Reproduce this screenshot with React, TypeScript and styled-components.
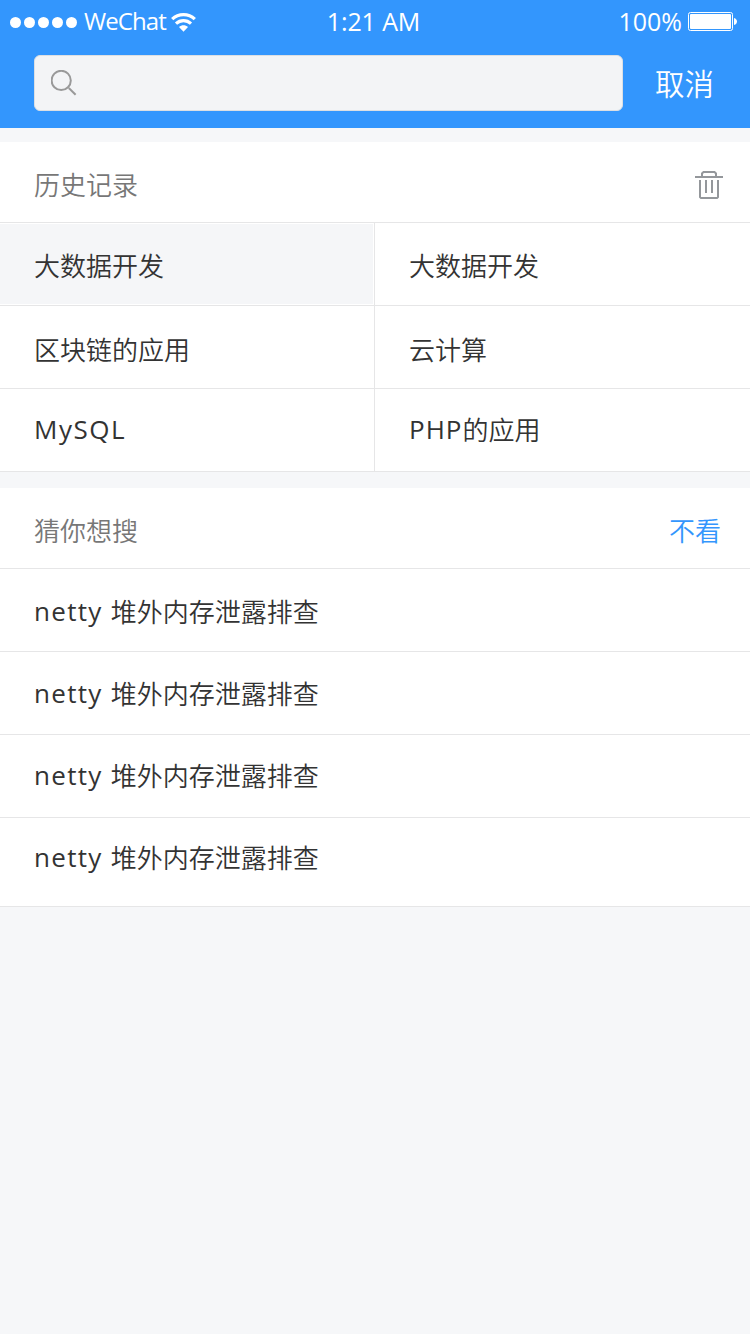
import React from "react";
import styled, { createGlobalStyle } from "styled-components";

const GlobalStyle = createGlobalStyle`
  * { box-sizing: border-box; }
  body {
    margin: 0;
    background: #f6f7f9;
    font-family: "Noto Sans CJK SC", sans-serif;
    font-size: 26px;
    font-weight: 350;
    line-height: 36px;
    color: #333;
  }
`;

const Screen = styled.div`
  width: 750px;
  min-height: 1334px;
  background: #f6f7f9;
`;

const Header = styled.header`
  height: 128px;
  background: #3396fd;
  color: #fff;
`;

const StatusBar = styled.div`
  display: grid;
  grid-template-columns: 1fr auto 1fr;
  align-items: center;
  height: 44px;
  padding: 0 13px 0 10px;
`;

const StatusGroup = styled.div<{ $end?: boolean }>`
  display: flex;
  align-items: center;
  justify-content: ${(p) => (p.$end ? "flex-end" : "flex-start")};
`;

const StatusText = styled.span<{ $size: number; $spacing: number }>`
  padding-bottom: 2px;
  font-family: "Open Sans", sans-serif;
  font-weight: 370;
  font-size: ${(p) => p.$size}px;
  letter-spacing: ${(p) => p.$spacing}px;
  white-space: nowrap;
`;

const Signal = styled.div`
  display: flex;
  gap: 3px;
  margin-right: 7px;
`;

const Dot = styled.i`
  width: 11px;
  height: 11px;
  border-radius: 50%;
  background: #fff;
`;

const WifiIcon = styled.svg`
  width: 25px;
  height: 20px;
  margin-left: 5px;
`;

const BatteryIcon = styled.svg`
  width: 49px;
  height: 20px;
  margin-left: 6px;
`;

const SearchBar = styled.div`
  display: flex;
  align-items: center;
  padding: 11px 0 0 34px;
`;

const SearchField = styled.div`
  display: flex;
  align-items: center;
  width: 589px;
  height: 56px;
  padding-left: 16px;
  border: 1px solid #dcdfe3;
  border-radius: 6px;
  background: #f3f4f6;
`;

const SearchIcon = styled.svg`
  width: 26px;
  height: 26px;
`;

const Cancel = styled.span`
  margin-left: 32px;
  padding-bottom: 2px;
  font-size: 29.5px;
`;

const Panel = styled.section<{ $gap: number }>`
  margin-top: ${(p) => p.$gap}px;
  background: #fff;
`;

const PanelHeader = styled.div`
  display: flex;
  align-items: center;
  justify-content: space-between;
  height: 81px;
  padding: 4px 27px 0 34px;
  border-bottom: 1px solid #e6e6e7;
`;

const PanelTitle = styled.h2`
  margin: 0;
  font-size: 26px;
  font-weight: 350;
  color: #777;
`;

const HideLink = styled.span`
  color: #3396fd;
  margin-right: 2px;
`;

const TrashIcon = styled.svg`
  width: 28px;
  height: 28px;
  margin-top: 2px;
`;

const HistoryGrid = styled.div`
  display: grid;
  grid-template-columns: 375px 375px;
`;

const HistoryCell = styled.div<{ $active?: boolean; $top: number }>`
  height: 83px;
  padding: ${(p) => p.$top}px 0 0 34px;
  border-bottom: 1px solid #e6e6e7;
  background: ${(p) => (p.$active ? "#f5f6f8" : "#fff")};
  box-shadow: ${(p) => (p.$active ? "inset -1px -1px #fff, inset 0 1px #fff" : "none")};
  &:nth-child(odd) {
    border-right: 1px solid #e6e6e7;
  }
`;

const SuggestRow = styled.div<{ $top: number; $height: number }>`
  height: ${(p) => p.$height}px;
  padding: ${(p) => p.$top}px 0 0 34px;
  border-bottom: 1px solid #e6e6e7;
`;

const Latin = styled.span<{ $spacing: number }>`
  font-family: "Open Sans", sans-serif;
  font-weight: 370;
  letter-spacing: ${(p) => p.$spacing}px;
  vertical-align: 1px;
`;

const history = [
  { cjk: "大数据开发", active: true, top: 24 },
  { cjk: "大数据开发", top: 24 },
  { cjk: "区块链的应用", top: 25 },
  { cjk: "云计算", top: 25 },
  { latin: "MySQL", top: 22 },
  { latin: "PHP", cjk: "的应用", top: 22 },
];

const suggestions = [
  { top: 24, height: 83 },
  { top: 23, height: 83 },
  { top: 22, height: 83 },
  { top: 21, height: 89 },
];

export default function App() {
  return (
    <Screen>
      <GlobalStyle />
      <Header>
        <StatusBar>
          <StatusGroup>
            <Signal>
              {[0, 1, 2, 3, 4].map((n) => (
                <Dot key={n} />
              ))}
            </Signal>
            <StatusText $size={24} $spacing={-0.9}>WeChat</StatusText>
            <WifiIcon viewBox="0 0 25 20" fill="none" stroke="#fff" strokeWidth="3.2">
              <path d="M1.2 7.2C7.5 1 17.5 1 23.8 7.2" />
              <path d="M5 11.6C9.3 7.7 15.7 7.7 20 11.6" />
              <path d="M8 15C10.5 12.6 14.5 12.6 17 15L12.5 19.8Z" fill="#fff" stroke="none" />
            </WifiIcon>
          </StatusGroup>
          <StatusText $size={25} $spacing={-0.1}>1:21 AM</StatusText>
          <StatusGroup $end>
            <StatusText $size={25} $spacing={0}>100%</StatusText>
            <BatteryIcon viewBox="0 0 49 20">
              <rect x=".5" y=".5" width="44" height="18" rx="2" fill="none" stroke="#fff" />
              <rect x="2" y="2" width="41" height="15" rx="1" fill="#fff" />
              <path d="M46 6c4 1 4 6 0 7z" fill="#fff" />
            </BatteryIcon>
          </StatusGroup>
        </StatusBar>
        <SearchBar>
          <SearchField>
            <SearchIcon viewBox="0 0 26 26" fill="none" stroke="#999" strokeWidth="2">
              <circle cx="10.2" cy="10.4" r="9.6" />
              <path d="M17.8 18l6.8 6.8" />
            </SearchIcon>
          </SearchField>
          <Cancel>取消</Cancel>
        </SearchBar>
      </Header>

      <Panel $gap={14}>
        <PanelHeader>
          <PanelTitle>历史记录</PanelTitle>
          <TrashIcon viewBox="0 0 28 28" fill="none" stroke="#94979b" strokeWidth="2">
            <path d="M0 6h28M7 6V2.5L8.5 1h11L21 2.5V6M5 9v17l1 1h16l1-1V9M11 9v13M17 9v13" />
          </TrashIcon>
        </PanelHeader>
        <HistoryGrid>
          {history.map((item, i) => (
            <HistoryCell key={i} $active={item.active} $top={item.top}>
              {item.latin && <Latin $spacing={item.cjk ? 1 : 1.5}>{item.latin}</Latin>}
              {item.cjk}
            </HistoryCell>
          ))}
        </HistoryGrid>
      </Panel>

      <Panel $gap={16}>
        <PanelHeader>
          <PanelTitle>猜你想搜</PanelTitle>
          <HideLink>不看</HideLink>
        </PanelHeader>
        {suggestions.map((row, i) => (
          <SuggestRow key={i} $top={row.top} $height={row.height}>
            <Latin $spacing={1.3}>netty </Latin>堆外内存泄露排查
          </SuggestRow>
        ))}
      </Panel>
    </Screen>
  );
}
